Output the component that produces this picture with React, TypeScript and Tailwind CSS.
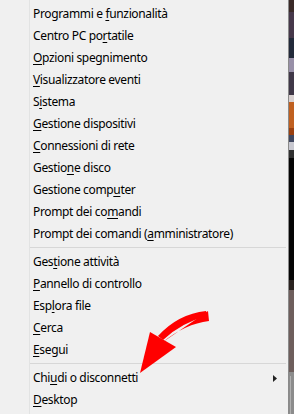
import React from "react";

type Item = { pre: string; key: string; post: string; sub?: boolean };

const groups: Item[][] = [
  [
    { pre: "Programmi e ", key: "f", post: "unzionalità" },
    { pre: "Centro PC po", key: "r", post: "tatile" },
    { pre: "", key: "O", post: "pzioni spegnimento" },
    { pre: "", key: "V", post: "isualizzatore eventi" },
    { pre: "S", key: "i", post: "stema" },
    { pre: "", key: "G", post: "estione dispositivi" },
    { pre: "", key: "C", post: "onnessioni di rete" },
    { pre: "Gestio", key: "n", post: "e disco" },
    { pre: "Gestione comp", key: "u", post: "ter" },
    { pre: "Prompt dei co", key: "m", post: "andi" },
    { pre: "Prompt dei comandi (", key: "a", post: "mministratore)" },
  ],
  [
    { pre: "Ges", key: "t", post: "ione attività" },
    { pre: "", key: "P", post: "annello di controllo" },
    { pre: "Esp", key: "l", post: "ora file" },
    { pre: "", key: "C", post: "erca" },
    { pre: "", key: "E", post: "segui" },
  ],
  [
    { pre: "Chi", key: "u", post: "di o disconnetti", sub: true },
    { pre: "", key: "D", post: "esktop" },
  ],
];

const strip: [number, number, string][] = [
  [0, 12, "#3a2a28"],
  [12, 38, "#46384a"],
  [38, 58, "#222a3a"],
  [58, 72, "#9890a8"],
  [72, 95, "#403848"],
  [95, 102, "#d8d0d0"],
  [102, 128, "#c06020"],
  [128, 135, "#9a4010"],
  [135, 142, "#404860"],
  [142, 150, "#c8c8d0"],
  [150, 158, "#303030"],
  [158, 280, "#050505"],
  [280, 290, "#2a2220"],
  [290, 372, "#6e5e5c"],
  [372, 414, "#8c8c8c"],
];

function MenuRow({ item }: { item: Item }) {
  return (
    <div className="flex h-[22px] items-center pl-[3px] text-[12px] tracking-[-0.35px] text-black">
      <span>
        {item.pre}
        <span className="underline decoration-1 underline-offset-2">{item.key}</span>
        {item.post}
      </span>
      {item.sub && (
        <svg className="ml-auto mr-[11px]" width="4" height="7" viewBox="0 0 4 7">
          <path d="M0 0 L4 3.5 L0 7 Z" fill="#222" />
        </svg>
      )}
    </div>
  );
}

export default function App() {
  return (
    <div
      className="relative flex h-[414px] w-[294px] overflow-hidden bg-[#f0f0f0]"
      style={{ fontFamily: '"Noto Sans", "Open Sans", sans-serif' }}
    >
      <div className="flex w-[288px] bg-[#f0f0f0]">
        <div className="w-[29px]" />
        <div className="flex flex-1 flex-col border-l border-[#e2e3e3] pt-[3px]">
          {groups.map((g, gi) => (
            <div key={gi}>
              {gi > 0 && (
                <div className="pb-[3px] pt-[2px] pr-[2px]">
                  <div className="h-px bg-[#d7d7d7]" />
                </div>
              )}
              {g.map((it, i) => (
                <MenuRow key={i} item={it} />
              ))}
            </div>
          ))}
        </div>
      </div>
      <div className="w-px bg-[#8a8a8a]" />
      <svg width="5" height="414" className="shrink-0">
        {strip.map(([a, b, c], i) => (
          <rect key={i} x="0" y={a} width="5" height={b - a} fill={c} />
        ))}
        <rect x="1" y="376" width="1" height="38" fill="#b0b0b0" />
      </svg>

      <svg className="pointer-events-none absolute left-0 top-0" width="294" height="414">
        <path
          d="M208 316 Q182 322 163 340 L158 336 Q178 314 206 311 Z"
          fill="#ff0000"
        />
        <path d="M208 311 L209 321 Q185 324 163 342 Z" fill="#ff0000" />
        <path d="M150 332 L176 347 L140 373 Z" fill="#ff0000" />
      </svg>
    </div>
  );
}
